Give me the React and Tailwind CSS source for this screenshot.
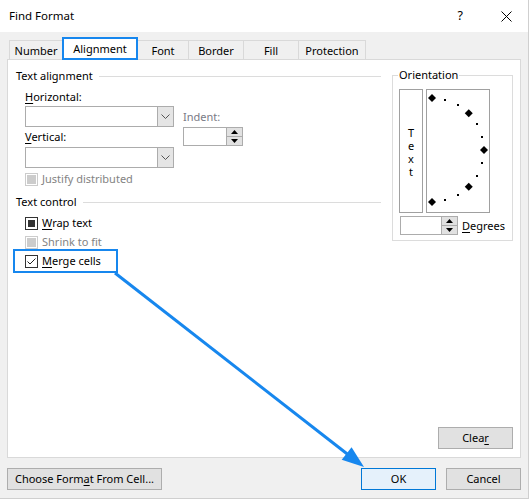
import React from "react";

const BLUE = "#1787ee";

function U({ children }) {
  return <span className="underline underline-offset-[2px]">{children}</span>;
}

function Tab({ w, children, first }) {
  return (
    <div
      className={`${w} h-[19px] flex items-center justify-center pt-[2px] border-t border-r border-[#d9d9d9] ${first ? "border-l" : ""} bg-[#f0f0f0]`}
    >
      {children}
    </div>
  );
}

function Combo() {
  return (
    <div className="w-[149px] h-[21px] border border-[#acacac] bg-white flex">
      <div className="flex-1" />
      <div className="w-[16px] h-full border-l border-[#acacac] bg-[#e5e5e5] flex items-center justify-center">
        <svg width="9" height="6" viewBox="0 0 9 6">
          <path d="M0.5 0.5 L4.5 4.5 L8.5 0.5" fill="none" stroke="#555" strokeWidth="1" />
        </svg>
      </div>
    </div>
  );
}

function Spin({ w }) {
  return (
    <div className={`${w} h-[19px] border border-[#acacac] bg-white flex`}>
      <div className="flex-1" />
      <div className="w-[16px] h-full border-l border-[#acacac] bg-[#e1e1e1] flex flex-col">
        <div className="flex-1 flex items-center justify-center border-b border-[#acacac]">
          <svg width="7" height="4" viewBox="0 0 7 4">
            <path d="M0 4 L3.5 0 L7 4 Z" fill="#000" />
          </svg>
        </div>
        <div className="flex-1 flex items-center justify-center">
          <svg width="7" height="4" viewBox="0 0 7 4">
            <path d="M0 0 L7 0 L3.5 4 Z" fill="#000" />
          </svg>
        </div>
      </div>
    </div>
  );
}

function Check({ state }) {
  if (state === "disabled") {
    return (
      <div className="w-[13px] h-[13px] border border-[#cccccc] bg-white flex items-center justify-center">
        <div className="w-[9px] h-[9px] bg-[#cccccc]" />
      </div>
    );
  }
  if (state === "mixed") {
    return (
      <div className="w-[13px] h-[13px] border border-[#333333] bg-white flex items-center justify-center">
        <div className="w-[7px] h-[7px] bg-[#333333]" />
      </div>
    );
  }
  return (
    <div className="w-[13px] h-[13px] border border-[#333333] bg-white flex items-center justify-center">
      <svg width="11" height="11" viewBox="0 0 11 11">
        <path d="M1.5 5.5 L4 8 L9.5 2.5" fill="none" stroke="#222" strokeWidth="1" />
      </svg>
    </div>
  );
}

function GroupHeader({ children }) {
  return (
    <div className="flex items-center h-[16px]">
      <span>{children}</span>
      <div className="flex-1 ml-[6px] h-px bg-[#dcdcdc]" />
    </div>
  );
}

function Dial() {
  const cx = 5;
  const cy = 60;
  const r = 52;
  const pts = [];
  for (let a = 90; a >= -90; a -= 15) {
    const t = (a * Math.PI) / 180;
    pts.push({ x: cx + r * Math.cos(t), y: cy - r * Math.sin(t), big: a % 45 === 0 });
  }
  return (
    <svg width="62" height="122" viewBox="0 0 62 122">
      {pts.map((p, i) =>
        p.big ? (
          <path
            key={i}
            d={`M${p.x} ${p.y - 4} L${p.x + 4} ${p.y} L${p.x} ${p.y + 4} L${p.x - 4} ${p.y} Z`}
            fill="#000"
          />
        ) : (
          <rect key={i} x={Math.round(p.x) - 1} y={Math.round(p.y) - 1} width="2" height="2" fill="#000" />
        )
      )}
    </svg>
  );
}

function Btn({ w, children, primary }) {
  return (
    <div
      className={`${w} h-[22px] border flex items-center justify-center ${
        primary ? "border-[#0078d7] bg-[#e5f1fb]" : "border-[#adadad] bg-[#e1e1e1]"
      }`}
    >
      {children}
    </div>
  );
}

export default function App() {
  const tipX = 364;
  const tipY = 467;
  const sx = 115;
  const sy = 273;
  const dx = tipX - sx;
  const dy = tipY - sy;
  const len = Math.hypot(dx, dy);
  const ux = dx / len;
  const uy = dy / len;
  const hl = 22;
  const hw = 8;
  const bx = tipX - hl * ux;
  const by = tipY - hl * uy;
  const w1x = bx - hw * uy;
  const w1y = by + hw * ux;
  const w2x = bx + hw * uy;
  const w2y = by - hw * ux;

  return (
    <div className="relative w-[529px] h-[499px] bg-[#f0f0f0] border-r border-b border-[#cfcfcf] font-['Noto_Sans',sans-serif] text-[11px] leading-[16px] text-[#000] overflow-hidden">
      {/* Title bar */}
      <div className="h-[32px] bg-white flex items-center pl-[9px] pr-[16px]">
        <span className="text-[11.5px]">Find Format</span>
        <span className="ml-auto mr-[38px] text-[12.5px]">?</span>
        <svg width="11" height="11" viewBox="0 0 11 11">
          <path d="M0.5 0.5 L10.5 10.5 M10.5 0.5 L0.5 10.5" stroke="#000" strokeWidth="1" />
        </svg>
      </div>

      <div className="px-[7px]">
        {/* Tabs */}
        <div className="h-[27px] flex items-end pl-[2px]">
          <Tab w="w-[54px]" first>
            Number
          </Tab>
          <div
            className="relative z-10 w-[76px] h-[23px] -mb-px -ml-px flex items-center justify-center bg-white border-2"
            style={{ borderColor: BLUE }}
          >
            Alignment
          </div>
          <Tab w="w-[51px]">Font</Tab>
          <Tab w="w-[55px]">Border</Tab>
          <Tab w="w-[55px]">Fill</Tab>
          <Tab w="w-[67px]">Protection</Tab>
        </div>

        {/* Panel */}
        <div className="h-[399px] border border-[#d9d9d9] bg-white flex flex-col">
          <div className="flex pt-[8px] pl-[8px] pr-[7px]">
            {/* Left column */}
            <div className="w-[365px] flex flex-col">
              <GroupHeader>Text alignment</GroupHeader>
              <div className="flex pl-[9px] mt-[5px]">
                <div className="flex flex-col">
                  <div>
                    <U>H</U>orizontal:
                  </div>
                  <div className="mt-[1px]">
                    <Combo />
                  </div>
                  <div className="mt-[2px]">
                    <U>V</U>ertical:
                  </div>
                  <div className="mt-[2px]">
                    <Combo />
                  </div>
                </div>
                <div className="flex flex-col ml-[9px] pt-[20px]">
                  <div className="text-[#7a7a86]">Indent:</div>
                  <div className="mt-[2px]">
                    <Spin w="w-[60px]" />
                  </div>
                </div>
              </div>
              <div className="flex items-center pl-[9px] mt-[3px] h-[16px]">
                <Check state="disabled" />
                <span className="ml-[4px] text-[#838383]">Justify distributed</span>
              </div>
              <div className="mt-[7px]">
                <GroupHeader>Text control</GroupHeader>
              </div>
              <div className="flex items-center pl-[9px] mt-[5px] h-[16px]">
                <Check state="mixed" />
                <span className="ml-[4px]">
                  <U>W</U>rap text
                </span>
              </div>
              <div className="flex items-center pl-[9px] mt-[3px] h-[16px]">
                <Check state="disabled" />
                <span className="ml-[4px] text-[#838383]">Shrink to fit</span>
              </div>
              <div className="flex items-center pl-[9px] mt-[3px] h-[16px]">
                <div className="relative flex items-center">
                  <Check state="checked" />
                  <span className="ml-[4px]">
                    <U>M</U>erge cells
                  </span>
                  <div
                    className="absolute -left-[12px] -top-[4px] w-[105px] h-[24px] border-2"
                    style={{ borderColor: BLUE }}
                  />
                </div>
              </div>
            </div>

            {/* Orientation */}
            <div className="ml-[11px] mt-[7px] w-[121px] h-[166px] border border-[#dcdcdc] flex flex-col">
              <div className="-mt-[9px] ml-[5px] px-px bg-white w-fit">Orientation</div>
              <div className="flex mt-[6px] pl-[6px]">
                <div className="w-[24px] h-[124px] border border-[#a0a0a0] flex flex-col items-center pt-[36px]">
                  <span className="whitespace-pre-line text-center leading-[13px]">{"T\ne\nx\nt"}</span>
                </div>
                <div className="ml-[3px] w-[64px] h-[124px] border border-[#a0a0a0]">
                  <Dial />
                </div>
              </div>
              <div className="flex items-center mt-[3px] pl-[7px]">
                <Spin w="w-[58px]" />
                <span className="ml-[4px]">
                  <U>D</U>egrees
                </span>
              </div>
            </div>
          </div>

          <div className="mt-auto self-end mr-[7px] mb-[8px]">
            <Btn w="w-[75px]">
              <span>
                Clea<U>r</U>
              </span>
            </Btn>
          </div>
        </div>

        {/* Bottom buttons */}
        <div className="flex mt-[10px]">
          <Btn w="w-[155px]">
            <span>
              Choose Form<U>a</U>t From Cell...
            </span>
          </Btn>
          <div className="ml-auto flex gap-[10px]">
            <Btn w="w-[75px]" primary>
              OK
            </Btn>
            <Btn w="w-[75px]">Cancel</Btn>
          </div>
        </div>
      </div>

      {/* Annotation arrow */}
      <svg className="absolute left-0 top-0 pointer-events-none" width="529" height="499" viewBox="0 0 529 499">
        <line x1={sx} y1={sy} x2={bx + 2 * ux} y2={by + 2 * uy} stroke={BLUE} strokeWidth="3" />
        <path d={`M${tipX} ${tipY} L${w1x} ${w1y} L${w2x} ${w2y} Z`} fill={BLUE} />
      </svg>
    </div>
  );
}
